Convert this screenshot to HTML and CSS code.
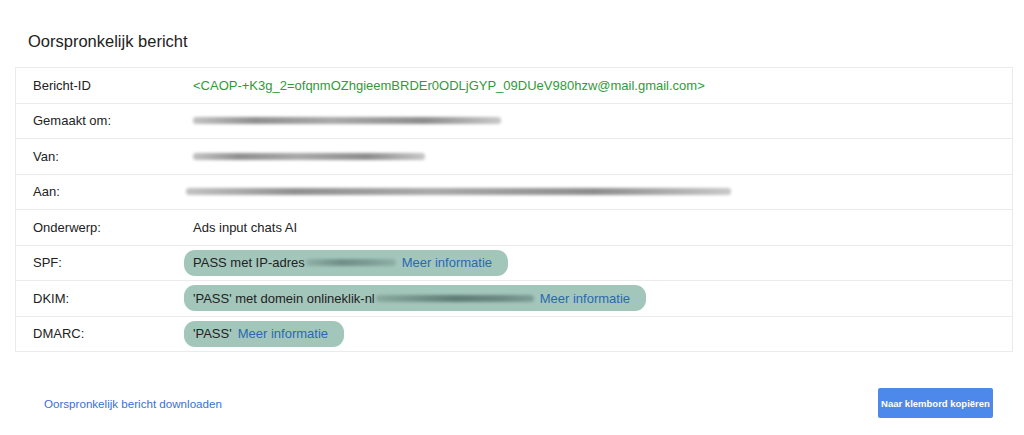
FILE: index.html
```html
<!DOCTYPE html>
<html lang="nl">
<head>
<meta charset="utf-8">
<title>Oorspronkelijk bericht</title>
<link rel="stylesheet" href="styles.css">
</head>
<body>
<div class="page">
  <h1 class="title">Oorspronkelijk bericht</h1>
  <div class="table">
    <div class="row"><div class="label">Bericht-ID</div><div class="value green">&lt;CAOP-+K3g_2=ofqnmOZhgieemBRDEr0ODLjGYP_09DUeV980hzw@mail.gmail.com&gt;</div></div>
    <div class="row"><div class="label">Gemaakt om:</div><div class="value"><span class="blur" style="width:308px"></span></div></div>
    <div class="row"><div class="label">Van:</div><div class="value"><span class="blur" style="width:232px"></span></div></div>
    <div class="row"><div class="label">Aan:</div><div class="value"><span class="blur aan" style="width:545px"></span></div></div>
    <div class="row"><div class="label">Onderwerp:</div><div class="value">Ads input chats AI</div></div>
    <div class="row"><div class="label">SPF:</div><div class="value"><span class="pill">PASS met IP-adres<span class="blur inpill" style="width:90px"></span><a class="more" href="#">Meer informatie</a></span></div></div>
    <div class="row"><div class="label">DKIM:</div><div class="value"><span class="pill">'PASS' met domein onlineklik-nl<span class="blur inpill dk" style="width:158px"></span><a class="more" href="#">Meer informatie</a></span></div></div>
    <div class="row"><div class="label">DMARC:</div><div class="value"><span class="pill">'PASS'<a class="more" href="#">Meer informatie</a></span></div></div>
  </div>
  <div class="footer">
    <a class="download" href="#">Oorspronkelijk bericht downloaden</a>
    <button class="copy" type="button">Naar klembord kopiëren</button>
  </div>
</div>
</body>
</html>
```
FILE: styles.css
```css
html, body { margin: 0; padding: 0; background: #fff; }
body { font-family: "Liberation Sans", Arial, sans-serif; color: #222; }
.page { padding: 0 11px 0 15px; }
.title { margin: 0; padding: 30px 0 0 13px; height: 37px; font-size: 16.5px; font-weight: normal; color: #222; line-height: 22px; }
.table { border: 1px solid #ebebeb; }
.row { display: flex; align-items: center; height: 34.5px; border-bottom: 1px solid #ebebeb; font-size: 13px; }
.row:last-child { border-bottom: none; }
.label { width: 160px; padding-left: 17px; flex: none; color: #222; }
.value { flex: 1; display: flex; align-items: center; }
.green { color: #2f9a3c; }
.blur { display: inline-block; height: 7px; border-radius: 3px; background: linear-gradient(90deg, #c2c2c2, #8f8f8f 20%, #a9a9a9 45%, #8c8c8c 75%, #c8c8c8); filter: blur(1.8px); }
.blur.aan { margin-left: -7px; }
.pill { display: inline-flex; align-items: center; height: 26px; margin-left: -9px; padding: 0 16px 0 9px; border-radius: 11px; background: #a3c6bb; color: #222; }
.blur.inpill { background: linear-gradient(90deg, #8fb0a6, #6f8f86 40%, #7c9c93 70%, #8fb0a6); margin-left: 1px; }
.blur.dk { background: linear-gradient(90deg, #89aa9f, #5f7d75 50%, #6d8b83 80%, #7f9f96); }
.more { color: #2a69b0; text-decoration: none; margin-left: 6px; }
.footer { display: flex; align-items: center; justify-content: space-between; padding: 36px 20px 0 29px; }
.download { color: #3a6fd6; font-size: 11.6px; text-decoration: none; }
.copy { height: 30px; width: 115px; border: none; border-radius: 2px; background: #4d89ea; color: #fff; font-family: "Liberation Sans", Arial, sans-serif; font-size: 9.5px; font-weight: bold; padding: 0; }
```
